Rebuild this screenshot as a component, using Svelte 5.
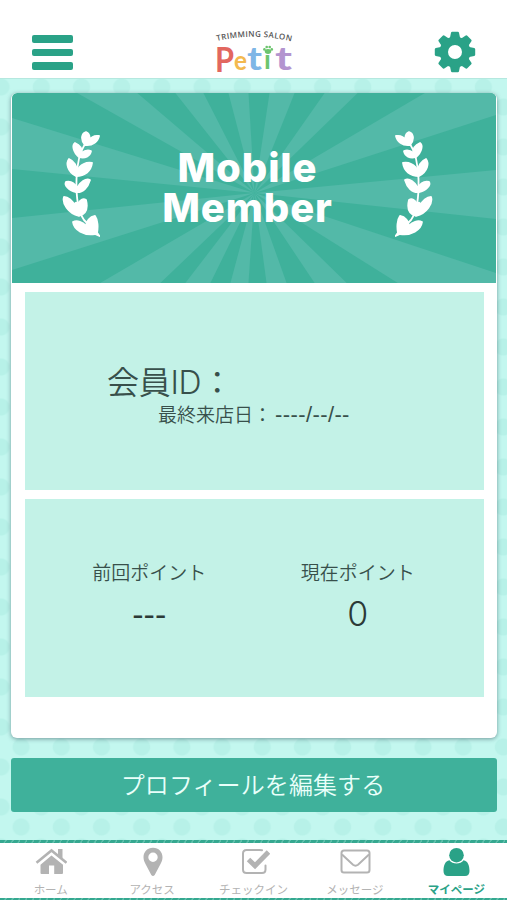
<script lang="ts">
  const rays = [
    "12,118 12,169",
    "12,218 12,270",
    "77,93 137,93",
    "175,93 203,93",
    "228,93 248,93",
    "269,93 294,93",
    "324,93 357,93",
    "424,93 495,93 495,115",
    "495,170 495,219",
    "495,273 495,283 397,283",
    "346,283 314,283",
    "286,283 266,283",
    "248,283 230,283",
    "210,283 185,283",
    "160,283 100,283",
  ];

  const tabs = [
    { id: "home", label: "ホーム" },
    { id: "access", label: "アクセス" },
    { id: "checkin", label: "チェックイン" },
    { id: "message", label: "メッセージ" },
    { id: "mypage", label: "マイページ" },
  ];
  const active = "mypage";

  const teeth = [0, 45, 90, 135, 180, 225, 270, 315];
</script>

{#snippet laurel()}
  <svg class="laurel" viewBox="0 0 38 106" aria-hidden="true">
    <path
      class="stem"
      d="M23 13 C17 22 15 34 14.5 48 C14 65 15 79 22 89 L36 103"
    />
    <path d="M23 14 C18 8 20 2 24 1 C27 2 28 5 27.5 9 C30 5 34 4.5 37 5 C36 10 31 15 23 14Z" />
    <path d="M17 26 C11 21 10 14 13 12 C18 14 20 18 19.5 22 C22 20 26 19 29 20 C28 25 23 28 17 26Z" />
    <path d="M14 45 C5 40 4 32 7 28 C12 30 15 35 15 40 C18 33 25 31 30 32 C29 40 23 45 14 45Z" />
    <path d="M14 61 C7 60 2 54 4 51 C9 50 13 53 15 57 C18 51 24 47 28 49 C26 56 21 62 14 61Z" />
    <path d="M17 85 C6 82 0 72 2 66 C6 66 11 70 12 74 C13 71 15 71 16 73 C18 69 21 67 24 69 C26 77 24 83 17 85Z" />
    <path d="M35 102 L37.5 105 L33 103 C22 105 12 99 11 91 C15 89 21 91 24 95 C24 90 28 86 33 85 C36 89 36 97 35 102Z" />
  </svg>
{/snippet}

<div class="app">
  <header class="topbar">
    <button class="menu" aria-label="メニュー">
      <span></span>
      <span></span>
      <span></span>
    </button>
    <svg class="logo" width="84" height="52" viewBox="0 0 84 52">
      <path id="arc" d="M4 15 Q42 6 80 16" fill="none" />
      <text class="tagline">
        <textPath href="#arc" textLength="75">TRIMMING SALON</textPath>
      </text>
      <g class="brand">
        <text x="2" y="46" font-size="34" fill="#e2675f" textLength="19" lengthAdjust="spacingAndGlyphs">P</text>
        <text x="21" y="44" font-size="27" fill="#f3b94f" textLength="13" lengthAdjust="spacingAndGlyphs">e</text>
        <text x="34" y="44" font-size="33" fill="#7fb6e6" textLength="15" lengthAdjust="spacingAndGlyphs">t</text>
        <text x="51" y="43" font-size="27" fill="#6cc56e">ı</text>
        <text x="62" y="44" font-size="33" fill="#b394cf" textLength="17" lengthAdjust="spacingAndGlyphs">t</text>
      </g>
      <g fill="#6cc56e">
        <ellipse cx="55" cy="25.5" rx="3.2" ry="2.4" />
        <circle cx="51.4" cy="23.4" r="1.3" />
        <circle cx="53.7" cy="21" r="1.3" />
        <circle cx="56.7" cy="21" r="1.3" />
        <circle cx="58.8" cy="23.4" r="1.3" />
      </g>
    </svg>
    <svg class="gear" width="42" height="42" viewBox="-21 -21 42 42" aria-label="設定">
      {#each teeth as angle}
        <path d="M-5.3 -13 L-4 -19.2 Q-3.8 -20.2 -2.8 -20.2 H2.8 Q3.8 -20.2 4 -19.2 L5.3 -13Z" transform="rotate({angle})" />
      {/each}
      <circle r="11.2" fill="none" stroke="#2aa287" stroke-width="8.4" />
    </svg>
  </header>

  <main>
    <section class="card">
      <div class="hero">
        <svg class="rays" viewBox="12 93 483 190" preserveAspectRatio="none">
          {#each rays as edge}
            <polygon points="254,193 {edge}" />
          {/each}
        </svg>
        {@render laurel()}
        <h1>Mobile<br />Member</h1>
        <div class="flip">{@render laurel()}</div>
      </div>

      <div class="panel member">
        <p class="id">会員ID：</p>
        <p class="visit">最終来店日：<span>----/--/--</span></p>
      </div>

      <div class="panel points">
        <div class="point">
          <span class="name">前回ポイント</span>
          <span class="value dashes">---</span>
        </div>
        <div class="point">
          <span class="name">現在ポイント</span>
          <span class="value">0</span>
        </div>
      </div>
    </section>

    <button class="edit">プロフィールを編集する</button>
  </main>

  <nav>
    {#each tabs as tab}
      <a class="tab" class:active={tab.id === active} href="#{tab.id}">
        <svg width="32" height="30" viewBox="0 0 32 30" fill="currentColor">
          {#if tab.id === "home"}
            <path d="M16.5 8.4 L28 17.8 V26 Q28 27 27 27 H19.2 V18.5 H14 V27 H6.5 Q5.5 27 5.5 26 V17.8Z" />
            <path d="M1.5 15.8 L16.5 3.5 L31.5 15.8" fill="none" stroke="currentColor" stroke-width="2.6" />
            <path d="M23 2 H27.5 V12 L23 8.3Z" />
          {:else if tab.id === "access"}
            <path
              fill-rule="evenodd"
              d="M17 0.8 C11.3 0.8 7.5 5 7.5 10.2 C7.5 13 8.5 15 9.5 17 L15.3 28 Q17 30 18.7 28 L24.5 17 C25.5 15 26.5 13 26.5 10.2 C26.5 5 22.7 0.8 17 0.8Z M17 5.6 A4.7 4.7 0 1 1 17 15 A4.7 4.7 0 1 1 17 5.6Z"
            />
          {:else if tab.id === "checkin"}
            <path
              d="M24 3.2 Q23 3 21.5 3 H8.5 Q5 3 5 6.5 V22.5 Q5 26 8.5 26 H24 Q27.5 26 27.5 22.5 V18.5"
              fill="none"
              stroke="currentColor"
              stroke-width="2"
              stroke-linecap="round"
            />
            <path d="M10.5 12.5 L17 18.7 L30.5 5" fill="none" stroke="currentColor" stroke-width="5" />
          {:else if tab.id === "message"}
            <rect x="2.5" y="3.5" width="28" height="22" rx="2.5" fill="none" stroke="currentColor" stroke-width="2" />
            <path d="M3 7.5 L14 17.8 Q16.5 19.6 19 17.8 L30 7.5" fill="none" stroke="currentColor" stroke-width="2" />
          {:else}
            <circle cx="16.5" cy="8.2" r="7.3" />
            <path d="M9.5 13.2 C12.5 17.6 20.5 17.6 23.5 13.2 C28 13.8 29.5 19 29.5 24 Q29.5 29 25 29 H8 Q3.5 29 3.5 24 C3.5 19 5 13.8 9.5 13.2Z" />
          {/if}
        </svg>
        <span>{tab.label}</span>
      </a>
    {/each}
  </nav>
</div>

<style>
  :global(body) {
    margin: 0;
  }
  .app {
    width: 507px;
    height: 900px;
    display: flex;
    flex-direction: column;
    overflow: hidden;
    color: #38504b;
    font-family: Inter, "Noto Sans CJK JP", sans-serif;
    font-weight: 350;
    background-color: #c3f7ef;
    background-image: radial-gradient(circle, #b7f1e8 7.8px, transparent 9.2px),
      radial-gradient(circle, #b7f1e8 7.8px, transparent 9.2px);
    background-size: 40.2px 40px;
    background-position: 1px 7px, -19px -13px;
  }
  .topbar {
    box-sizing: border-box;
    height: 79px;
    padding: 26px 31px 0 32px;
    display: flex;
    justify-content: space-between;
    align-items: flex-start;
    background: #fff;
    border-bottom: 1px solid #b5e8df;
  }
  .menu {
    width: 41px;
    margin-top: 9px;
    padding: 0;
    border: 0;
    background: none;
    display: flex;
    flex-direction: column;
    gap: 6px;
  }
  .menu span {
    height: 7.5px;
    border-radius: 2px;
    background: #2aa287;
  }
  .logo {
    margin-left: 2px;
    overflow: visible;
  }
  .tagline {
    font: 600 8px "Open Sans", sans-serif;
    fill: #555;
  }
  .brand {
    font-family: Lato, sans-serif;
    font-weight: 700;
  }
  .gear {
    margin-top: 5px;
    fill: #2aa287;
  }
  main {
    flex: 1;
    padding: 14px 10px 0 11px;
  }
  .card {
    box-sizing: border-box;
    height: 645px;
    padding: 0 1px;
    background: #fff;
    border-radius: 6px;
    overflow: hidden;
    box-shadow: 0 1px 4px rgba(60, 90, 100, 0.6);
  }
  .hero {
    position: relative;
    height: 190px;
    display: flex;
    justify-content: space-between;
    align-items: flex-start;
    padding: 0 63px 0 50px;
    box-sizing: border-box;
    background: #3fb19b;
    border-radius: 5px 5px 0 0;
    overflow: hidden;
  }
  .rays {
    position: absolute;
    inset: 0;
    width: 100%;
    height: 100%;
    fill: #53b9a8;
  }
  .laurel {
    position: relative;
    display: block;
    width: 38px;
    height: 106px;
    margin-top: 38px;
    fill: #fff;
    stroke: #fff;
    stroke-width: 1.8;
    stroke-linejoin: round;
  }
  .stem {
    fill: none;
  }
  .flip {
    transform: scaleX(-1);
  }
  h1 {
    position: relative;
    margin: 55px 0 0;
    color: #fff;
    font: 800 40px/40px Inter, "Liberation Sans", sans-serif;
    letter-spacing: 0.9px;
    text-align: center;
  }
  .panel {
    box-sizing: border-box;
    height: 198px;
    margin: 9px 12px 0 13px;
    background: #c3f2e7;
  }
  .member {
    padding-top: 72px;
  }
  .member p {
    margin: 0;
  }
  .member .id {
    padding-left: 82px;
    font-size: 32px;
    line-height: 38px;
    letter-spacing: -0.3px;
  }
  .member .visit {
    padding-left: 133px;
    font-size: 19px;
    line-height: 28px;
  }
  .visit span {
    font-family: "Liberation Sans", sans-serif;
    font-size: 22px;
    letter-spacing: 0.4px;
    line-height: 1;
    margin-left: 3px;
  }
  .points {
    display: flex;
    padding: 62px 22px 0 20px;
  }
  .point {
    flex: 1;
    display: flex;
    flex-direction: column;
    align-items: center;
  }
  .name {
    font-size: 19px;
    line-height: 26px;
  }
  .value {
    font-size: 34px;
    line-height: 54px;
    color: #2c3a37;
  }
  .dashes {
    font-family: "Liberation Sans", sans-serif;
  }
  .edit {
    display: block;
    width: 100%;
    height: 54px;
    margin-top: 20px;
    padding: 0 2px 3px 0;
    border: 0;
    border-radius: 3px;
    background: #3fb19b;
    color: #e9fffa;
    font: 350 24px "Noto Sans CJK JP", sans-serif;
    letter-spacing: 0.1px;
  }
  nav {
    position: relative;
    box-sizing: border-box;
    height: 60px;
    padding: 3px 0;
    display: flex;
    background: #fff;
  }
  nav::before,
  nav::after {
    content: "";
    position: absolute;
    left: 0;
    right: 0;
    height: 2.5px;
    background: repeating-linear-gradient(120deg, #35a890 0 4px, #5fbfab 5px 6px);
  }
  nav::before {
    top: 0;
  }
  nav::after {
    bottom: 0;
  }
  .tab {
    flex: 1;
    display: flex;
    flex-direction: column;
    align-items: center;
    padding-top: 4px;
    color: #b3b3b3;
    font-size: 11.5px;
    font-weight: 400;
    line-height: 16px;
    text-decoration: none;
    white-space: nowrap;
  }
  .tab svg {
    flex-shrink: 0;
  }
  .tab span {
    margin-top: 5px;
  }
  .tab.active {
    color: #2aa287;
    font-weight: 700;
  }
</style>
